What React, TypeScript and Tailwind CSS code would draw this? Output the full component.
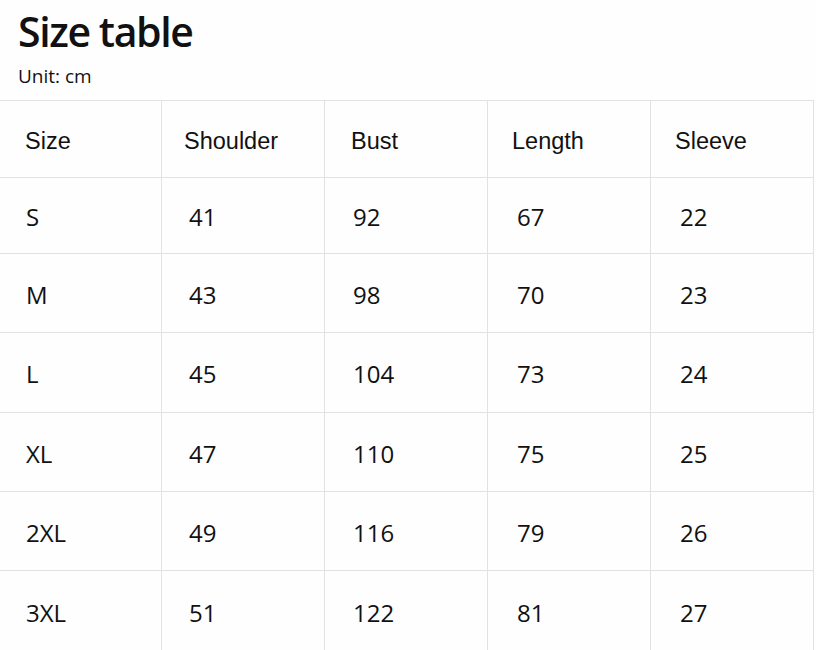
import React from 'react';

const headers = ['Size', 'Shoulder', 'Bust', 'Length', 'Sleeve'];

const rows = [
  ['S', '41', '92', '67', '22'],
  ['M', '43', '98', '70', '23'],
  ['L', '45', '104', '73', '24'],
  ['XL', '47', '110', '75', '25'],
  ['2XL', '49', '116', '79', '26'],
  ['3XL', '51', '122', '81', '27'],
];

// row heights as measured (border included)
const rowHeights = ['h-[76px]', 'h-[79px]', 'h-[80px]', 'h-[79px]', 'h-[79px]', 'h-[80px]'];

const headPad = ['pl-[25px]', 'pl-[22px]', 'pl-[26px]', 'pl-[24px]', 'pl-[24px]'];
const cellPad = ['pl-[26px]', 'pl-[27px]', 'pl-[28px]', 'pl-[29px]', 'pl-[29px]'];

export default function App() {
  return (
    <div className="w-[816px] h-[650px] overflow-hidden bg-[#fefefe] text-[#111]">
      <div className="pl-[18px] pt-[11px]">
        <h1 className="text-[41px] leading-none font-semibold font-['Open_Sans',sans-serif] tracking-[-1.4px]">
          Size table
        </h1>
        <p className="mt-[15px] text-[19px] leading-none font-['Open_Sans',sans-serif]">Unit: cm</p>
      </div>

      <div className="mt-[14px] w-[814px] border-t border-[#e2e2e2]">
        <div className="grid grid-cols-[162px_163px_163px_163px_163px] h-[77px] border-b border-[#e2e2e2]">
          {headers.map((h, i) => (
            <div
              key={h}
              className={`flex items-center pt-[5px] border-r border-[#e2e2e2] text-[23.5px] font-['Liberation_Sans',Arial,sans-serif] ${headPad[i]}`}
            >
              {h}
            </div>
          ))}
        </div>
        {rows.map((r, ri) => (
          <div
            key={r[0]}
            className={`grid grid-cols-[162px_163px_163px_163px_163px] ${ri < rows.length - 1 ? 'border-b border-[#e2e2e2]' : ''} ${rowHeights[ri]}`}
          >
            {r.map((c, ci) => (
              <div
                key={ci}
                className={`flex items-center pt-[3px] border-r border-[#e2e2e2] text-[24px] font-['Open_Sans',sans-serif] ${cellPad[ci]}`}
              >
                {c}
              </div>
            ))}
          </div>
        ))}
      </div>
    </div>
  );
}
